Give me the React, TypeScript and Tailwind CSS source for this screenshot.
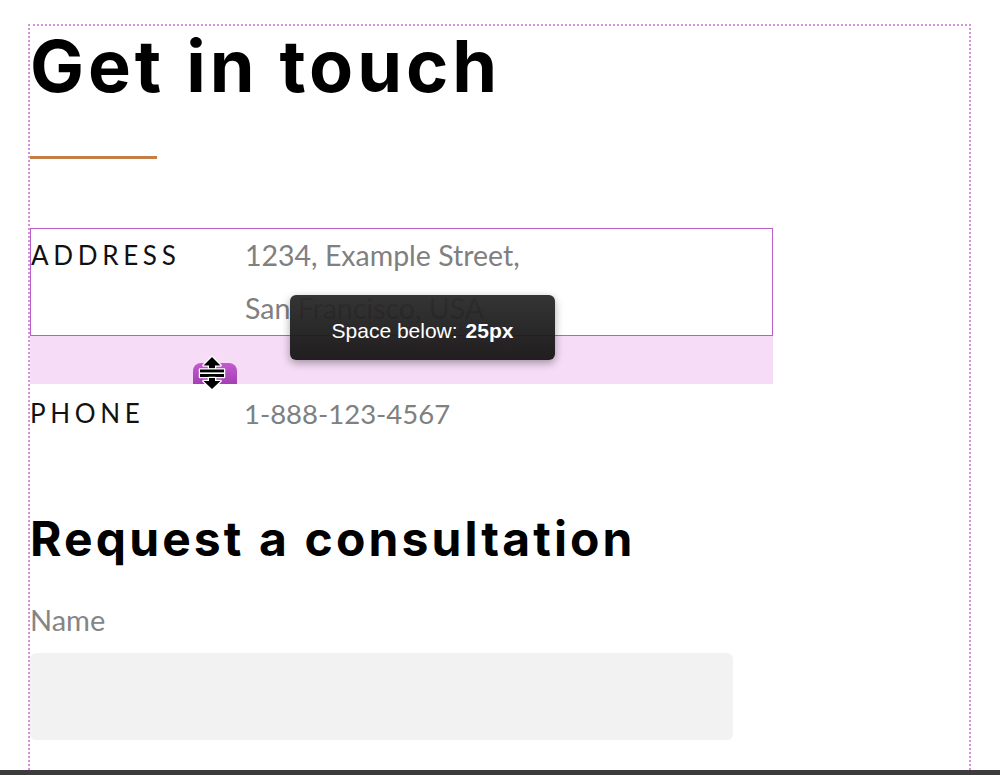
import React from "react";

const body = { fontFamily: "Lato, 'Open Sans', sans-serif" };
const display = { fontFamily: "Inter, 'Open Sans', sans-serif" };

function ResizeCursor() {
  return (
    <svg viewBox="0 0 30 34" className="h-[34px] w-[30px]">
      <g stroke="#fff" strokeWidth="2.5" strokeLinejoin="round" paintOrder="stroke" fill="#000">
        <path d="M15 1 L23.5 9.5 L18 9.5 L18 12.5 L12 12.5 L12 9.5 L6.5 9.5 Z" />
        <rect x="3" y="13.5" width="24" height="3" />
        <rect x="3" y="18" width="24" height="3" />
        <path d="M12 22 L18 22 L18 25 L23.5 25 L15 33 L6.5 25 L12 25 Z" />
      </g>
    </svg>
  );
}

function InfoRow({ label, children }: { label: string; children: React.ReactNode }) {
  return (
    <div className="flex text-[28.5px] leading-[53px]" style={body}>
      <div className="w-[214px] shrink-0 text-[26px] tracking-[0.18em] text-[#111]">{label}</div>
      <div className="text-[#808080]">{children}</div>
    </div>
  );
}

export default function App() {
  return (
    <div className="flex h-[775px] w-[1000px] flex-col overflow-hidden bg-white">
      <div className="flex-1 overflow-hidden pl-[28px] pt-[24px]">
        <div className="relative h-full w-[943px] border-2 border-b-0 border-dotted border-[#d98fe0]">
          <h1 className="mt-[4px] text-[72px] font-bold leading-[72px] tracking-[0.055em] text-black" style={display}>
            Get in touch
          </h1>
          <div className="mt-[54px] h-[3px] w-[127px] bg-[#c47f48]" />

          <div className="mt-[69px] w-[743px]">
            <div className="border border-[#b95fc9]">
              <InfoRow label="ADDRESS">
                <div>1234, Example Street,</div>
                <div>San Francisco, USA</div>
              </InfoRow>
            </div>
            <div className="h-[48px] bg-[#f6dcf6]" />
            <div className="pt-[3px]">
              <InfoRow label="PHONE">
                <span className="text-[27.5px]">1-888-123-4567</span>
              </InfoRow>
            </div>
          </div>

          <h2 className="mt-[70px] text-[48px] font-bold leading-[58px] tracking-[0.065em] text-black" style={display}>
            Request a consultation
          </h2>
          <label className="mt-[36px] block text-[29px] leading-[32px] text-[#858585]" style={body}>
            Name
          </label>
          <div className="mt-[17px] h-[87px] w-[703px] rounded-md bg-[#f2f2f2]" />

          <div className="absolute left-[163px] top-[337px] h-[21px] w-[44px] rounded-t-[8px] bg-gradient-to-b from-[#c45ad0] to-[#a43fb4]" />
          <div className="absolute left-[167px] top-[330px]">
            <ResizeCursor />
          </div>

          <div
            className="absolute left-[260px] top-[269px] flex h-[65px] w-[265px] items-center justify-center rounded-md bg-gradient-to-b from-[#2b2a2a]/95 to-[#151414]/95 pt-[6px] text-[21px] text-white shadow-[0_3px_8px_rgba(0,0,0,0.35)]"
            style={{ fontFamily: "'Liberation Sans', Arial, sans-serif" }}
          >
            <span>Space below:</span>
            <span className="ml-[8px] font-bold">25px</span>
          </div>
        </div>
      </div>
      <div className="h-[5px] bg-[#3c3c3c]" />
    </div>
  );
}
